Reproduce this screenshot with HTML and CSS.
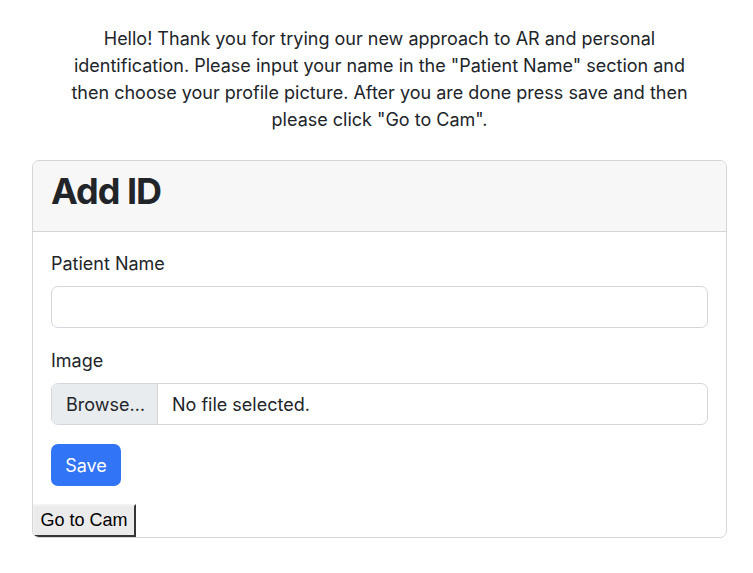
FILE: index.html
```html
<!DOCTYPE html>
<html lang="en">
<head>
<meta charset="utf-8">
<title>Add ID</title>
<link rel="stylesheet" href="styles.css">
</head>
<body>
<div class="page">
  <p class="intro">Hello! Thank you for trying our new approach to AR and personal identification. Please input your name in the "Patient Name" section and then choose your profile picture. After you are done press save and then please click "Go to Cam".</p>
  <div class="card">
    <div class="card-header">
      <h1 class="title">Add ID</h1>
    </div>
    <div class="card-body">
      <div class="field">
        <label class="label" for="name">Patient Name</label>
        <div class="input" id="name"></div>
      </div>
      <div class="field">
        <label class="label">Image</label>
        <div class="file">
          <span class="file-btn">Browse…</span>
          <span class="file-text">No file selected.</span>
        </div>
      </div>
      <button class="btn-save" type="button">Save</button>
    </div>
    <div class="cam-row"><button class="btn-cam" type="button">Go to Cam</button></div>
  </div>
</div>
</body>
</html>
```
FILE: styles.css
```css
* { box-sizing: border-box; }
html, body { margin: 0; padding: 0; background: #fff; }
body {
  font-family: Inter, "Liberation Sans", Arial, sans-serif;
  font-size: 18px;
  line-height: 27px;
  color: #212529;
}
.page {
  width: 695px;
  margin-left: 32px;
  padding-top: 25px;
}
.intro {
  margin: 0 0 27px;
  padding: 0 36px;
  text-align: center;
}
.card {
  border: 1px solid #d6d6d6;
  border-radius: 7px;
  overflow: hidden;
  background: #fff;
}
.card-header {
  background: #f7f7f7;
  border-bottom: 1px solid #d6d6d6;
  padding: 9px 18px 9px;
}
.title {
  margin: 0 0 9px;
  font-size: 36px;
  line-height: 43px;
  font-weight: 700;
  color: #212529;
  letter-spacing: -1px;
}
.card-body {
  padding: 18px 18px 18px;
}
.field { margin-bottom: 19px; }
.label {
  display: block;
  margin-bottom: 9px;
}
.input {
  height: 42px;
  border: 1px solid #d4d6d9;
  border-radius: 7px;
  background: #fff;
}
.file {
  display: flex;
  height: 42px;
  border: 1px solid #d4d6d9;
  border-radius: 7px;
  overflow: hidden;
}
.file-btn {
  display: flex;
  align-items: center;
  padding: 0 14px;
  background: #e9ecef;
  border-right: 1px solid #d4d6d9;
  width: 106px;
}
.file-text {
  display: flex;
  align-items: center;
  padding-left: 14px;
}
.btn-save {
  display: block;
  width: 70px;
  height: 42px;
  border: 0;
  border-radius: 7px;
  background: #3174f5;
  color: #fff;
  font-family: inherit;
  font-size: 18px;
  padding: 0;
}
.cam-row { display: flex; }
.btn-cam {
  width: 104px;
  height: 33px;
  padding: 0;
  margin-left: -1px;
  font-family: "Liberation Sans", Arial, sans-serif;
  font-size: 18px;
  color: #000;
  background: #ebebeb;
  border: 2px outset #b0b0b0;
  border-top-color: #f3f3f3;
  border-left-color: #f3f3f3;
  border-right-color: #8a8a8a;
  border-bottom-color: #8a8a8a;
  border-radius: 0;
}
```
